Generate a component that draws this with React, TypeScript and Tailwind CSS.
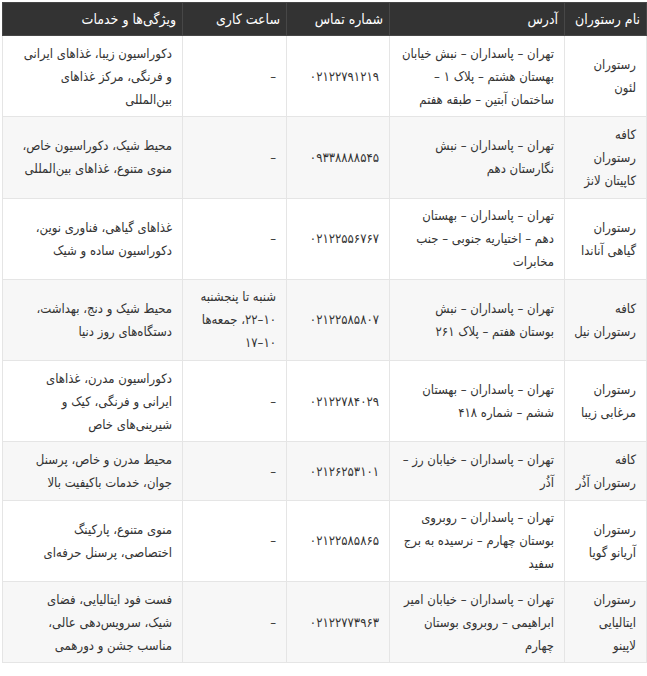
import React from "react";

type Row = {
  name: string[];
  address: string[];
  phone: string;
  hours: string[];
  features: string[];
};

const rows: Row[] = [
  {
    name: ["رستوران", "لئون"],
    address: ["تهران – پاسداران – نبش خیابان", "بهستان هشتم – پلاک ۱ –", "ساختمان آبتین – طبقه هفتم"],
    phone: "۰۲۱۲۲۷۹۱۲۱۹",
    hours: ["–"],
    features: ["دکوراسیون زیبا، غذاهای ایرانی", "و فرنگی، مرکز غذاهای", "بین‌المللی"],
  },
  {
    name: ["کافه", "رستوران", "کاپیتان لانژ"],
    address: ["تهران – پاسداران – نبش", "نگارستان دهم"],
    phone: "۰۹۳۳۸۸۸۸۵۴۵",
    hours: ["–"],
    features: ["محیط شیک، دکوراسیون خاص،", "منوی متنوع، غذاهای بین‌المللی"],
  },
  {
    name: ["رستوران", "گیاهی آناندا"],
    address: ["تهران – پاسداران – بهستان", "دهم – اختیاریه جنوبی – جنب", "مخابرات"],
    phone: "۰۲۱۲۲۵۵۶۷۶۷",
    hours: ["–"],
    features: ["غذاهای گیاهی، فناوری نوین،", "دکوراسیون ساده و شیک"],
  },
  {
    name: ["کافه", "رستوران نیل"],
    address: ["تهران – پاسداران – نبش", "بوستان هفتم – پلاک ۲۶۱"],
    phone: "۰۲۱۲۲۵۸۵۸۰۷",
    hours: ["شنبه تا پنجشنبه", "۱۰–۲۲، جمعه‌ها", "۱۰–۱۷"],
    features: ["محیط شیک و دنج، بهداشت،", "دستگاه‌های روز دنیا"],
  },
  {
    name: ["رستوران", "مرغابی زیبا"],
    address: ["تهران – پاسداران – بهستان", "ششم – شماره ۴۱۸"],
    phone: "۰۲۱۲۲۷۸۴۰۲۹",
    hours: ["–"],
    features: ["دکوراسیون مدرن، غذاهای", "ایرانی و فرنگی، کیک و", "شیرینی‌های خاص"],
  },
  {
    name: ["کافه", "رستوران آذُر"],
    address: ["تهران – پاسداران – خیابان رز –", "آذُر"],
    phone: "۰۲۱۲۶۲۵۳۱۰۱",
    hours: ["–"],
    features: ["محیط مدرن و خاص، پرسنل", "جوان، خدمات باکیفیت بالا"],
  },
  {
    name: ["رستوران", "آریانو گویا"],
    address: ["تهران – پاسداران – روبروی", "بوستان چهارم – نرسیده به برج", "سفید"],
    phone: "۰۲۱۲۲۵۸۵۸۶۵",
    hours: ["–"],
    features: ["منوی متنوع، پارکینگ", "اختصاصی، پرسنل حرفه‌ای"],
  },
  {
    name: ["رستوران", "ایتالیایی", "لاپینو"],
    address: ["تهران – پاسداران – خیابان امیر", "ابراهیمی – روبروی بوستان", "چهارم"],
    phone: "۰۲۱۲۲۷۷۳۹۶۳",
    hours: ["–"],
    features: ["فست فود ایتالیایی، فضای", "شیک، سرویس‌دهی عالی،", "مناسب جشن و دورهمی"],
  },
];

function Lines({ lines }: { lines: string[] }) {
  return (
    <>
      {lines.map((l, i) => (
        <div key={i} className="whitespace-nowrap">
          {l}
        </div>
      ))}
    </>
  );
}

const th =
  "whitespace-nowrap border border-[#474747] px-[6px] py-[6px] text-right align-middle font-normal text-white text-[14px] leading-[20px]";
const td =
  "border border-[#e5e5e5] px-[10px] py-[5.65px] text-right align-middle text-[#333333] text-[13px] leading-[23px]";

export default function App() {
  return (
    <div className="min-h-screen bg-white pl-[2px] pr-[1px] pt-[2px] font-['DejaVu_Sans_Condensed','DejaVu_Sans',sans-serif]">
      <table dir="rtl" className="w-[644px] table-fixed border-collapse">
        <colgroup>
          <col className="w-[82px]" />
          <col className="w-[175px]" />
          <col className="w-[103px]" />
          <col className="w-[104px]" />
          <col className="w-[180px]" />
        </colgroup>
        <thead>
          <tr className="bg-[#333333]">
            <th className={th}>نام رستوران</th>
            <th className={th}>آدرس</th>
            <th className={th}>شماره تماس</th>
            <th className={th}>ساعت کاری</th>
            <th className={th}>ویژگی‌ها و خدمات</th>
          </tr>
        </thead>
        <tbody>
          {rows.map((r, i) => (
            <tr key={i} className={i % 2 === 1 ? "bg-[#f7f7f7]" : "bg-white"}>
              <td className={td}>
                <Lines lines={r.name} />
              </td>
              <td className={td}>
                <Lines lines={r.address} />
              </td>
              <td className={td}>
                <div className="whitespace-nowrap">{r.phone}</div>
              </td>
              <td className={td}>
                <Lines lines={r.hours} />
              </td>
              <td className={td}>
                <Lines lines={r.features} />
              </td>
            </tr>
          ))}
        </tbody>
      </table>
    </div>
  );
}
